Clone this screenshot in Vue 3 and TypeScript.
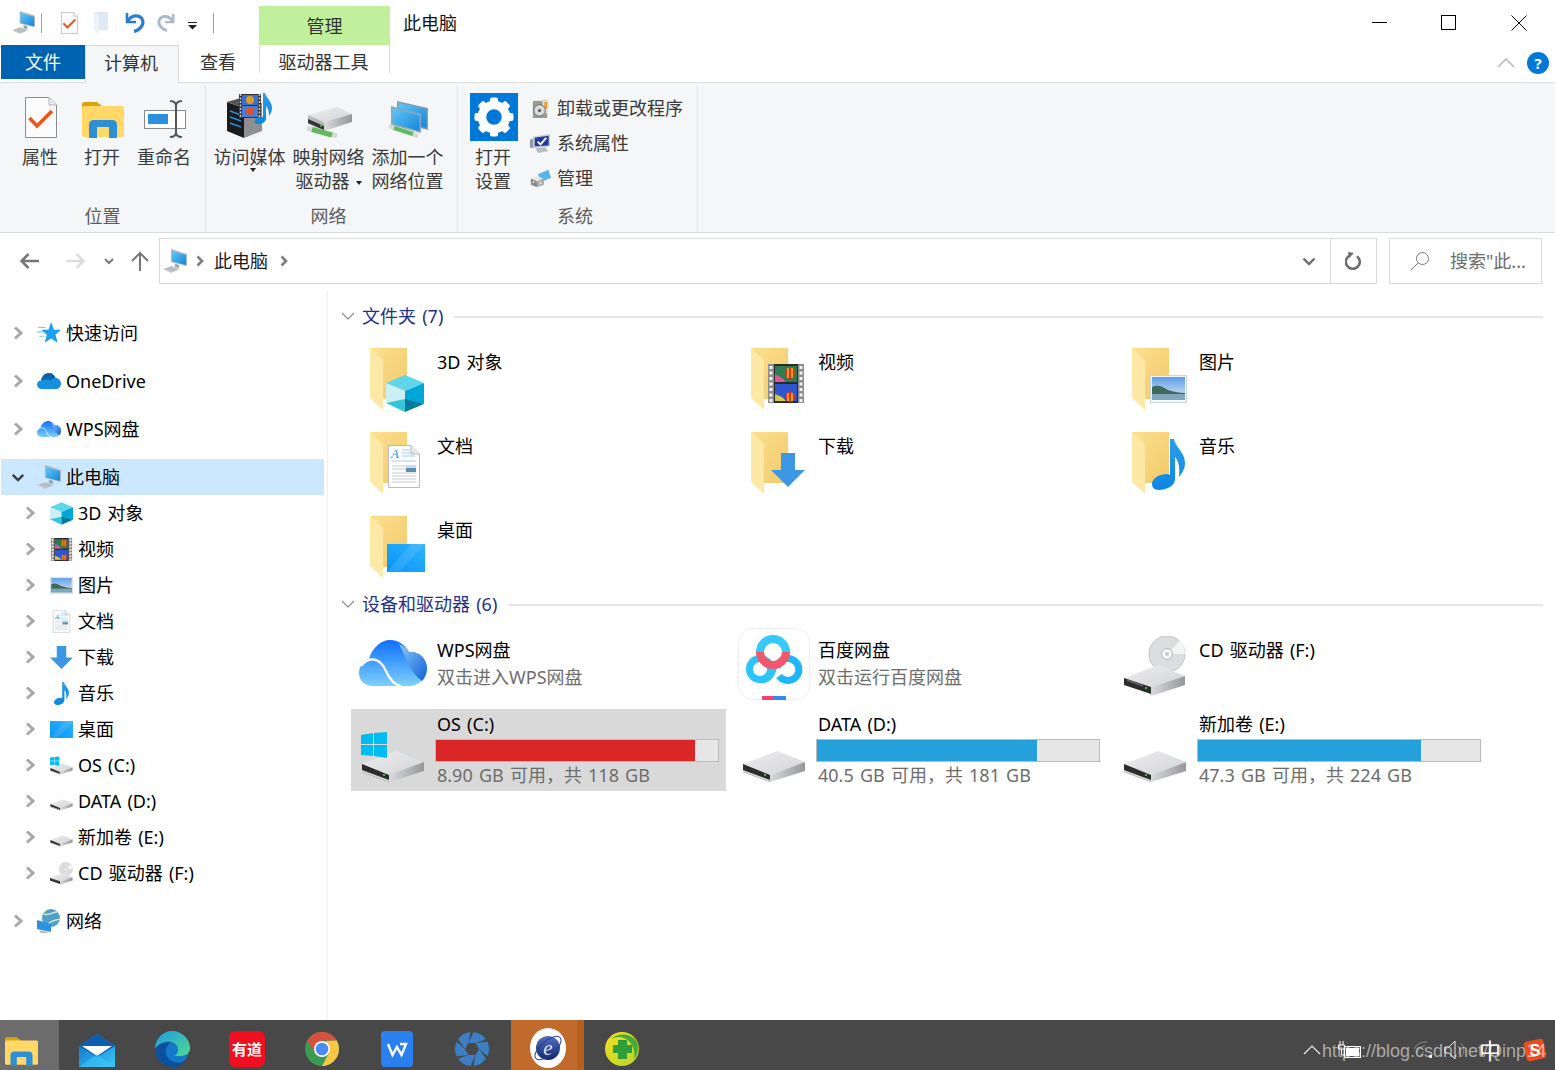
<script setup lang="ts">
type Tile = { name: string; overlay: string; x: number; y: number; w: number; h: number };
type Drive = { name: string; icon: string; detail?: string; used?: number; full?: boolean; selected?: boolean };
type NavItem = { name: string; icon: string };

const topItems: NavItem[] = [
  { name: '快速访问', icon: 'star' },
  { name: 'OneDrive', icon: 'onedrive' },
  { name: 'WPS网盘', icon: 'wpscloud' },
];

const pcItems: NavItem[] = [
  { name: '3D 对象', icon: 'cube' },
  { name: '视频', icon: 'film' },
  { name: '图片', icon: 'picture' },
  { name: '文档', icon: 'page' },
  { name: '下载', icon: 'arrow' },
  { name: '音乐', icon: 'note' },
  { name: '桌面', icon: 'desktop' },
  { name: 'OS (C:)', icon: 'windrive' },
  { name: 'DATA (D:)', icon: 'drive' },
  { name: '新加卷 (E:)', icon: 'drive' },
  { name: 'CD 驱动器 (F:)', icon: 'cddrive' },
];

const folders: Tile[] = [
  { name: '3D 对象', overlay: 'cube', x: 16, y: 27, w: 38, h: 37 },
  { name: '视频', overlay: 'film', x: 17, y: 16, w: 36, h: 39 },
  { name: '图片', overlay: 'picture', x: 18, y: 27, w: 37, h: 28 },
  { name: '文档', overlay: 'page', x: 18, y: 13, w: 32, h: 43 },
  { name: '下载', overlay: 'arrow', x: 20, y: 21, w: 34, h: 34 },
  { name: '音乐', overlay: 'note', x: 20, y: 7, w: 33, h: 51 },
  { name: '桌面', overlay: 'desktop', x: 17, y: 28, w: 38, h: 28 },
];

const drives: Drive[] = [
  { name: 'WPS网盘', icon: 'wpscloud', detail: '双击进入WPS网盘' },
  { name: '百度网盘', icon: 'baidu', detail: '双击运行百度网盘' },
  { name: 'CD 驱动器 (F:)', icon: 'cddrive' },
  { name: 'OS (C:)', icon: 'windrive', detail: '8.90 GB 可用，共 118 GB', used: 92, full: true, selected: true },
  { name: 'DATA (D:)', icon: 'drive', detail: '40.5 GB 可用，共 181 GB', used: 77.9 },
  { name: '新加卷 (E:)', icon: 'drive', detail: '47.3 GB 可用，共 224 GB', used: 79.2 },
];

const taskApps = ['mail', 'edge', 'youdao', 'chrome', 'wps', 'aperture'];
const gearTeeth = [0, 45, 90, 135, 180, 225, 270, 315];
const blades = [0, 60, 120, 180, 240, 300];
</script>

<template>
  <div class="explorer">
    <svg class="defs" aria-hidden="true">
      <defs>
        <linearGradient id="gScreen" x1="0" y1="0" x2="1" y2="1"><stop offset="0" stop-color="#62c6f7" /><stop offset="1" stop-color="#1487dc" /></linearGradient>
        <linearGradient id="gFolder" x1="0" y1="0" x2="1" y2="1"><stop offset="0" stop-color="#fde08f" /><stop offset="1" stop-color="#f1c96b" /></linearGradient>
        <linearGradient id="gNote" x1="0" y1="0" x2="0" y2="1"><stop offset="0" stop-color="#2a9fe8" /><stop offset="1" stop-color="#0c86e2" /></linearGradient>
        <linearGradient id="gDesk" x1="0" y1="1" x2="1" y2="0"><stop offset="0" stop-color="#0595f5" /><stop offset="1" stop-color="#30b2fe" /></linearGradient>
        <linearGradient id="gSky" x1="0" y1="0" x2="0" y2="1"><stop offset="0" stop-color="#5f9fe6" /><stop offset="1" stop-color="#dfeaf3" /></linearGradient>
        <linearGradient id="gDriveTop" x1="0" y1="0" x2="1" y2="1"><stop offset="0" stop-color="#eeeef0" /><stop offset="1" stop-color="#d2d3d6" /></linearGradient>
        <linearGradient id="gDriveSide" x1="0" y1="0" x2="1" y2="0"><stop offset="0" stop-color="#d9dadc" /><stop offset="1" stop-color="#96979b" /></linearGradient>
        <linearGradient id="gCloud" x1="0" y1="0" x2="0" y2="1"><stop offset="0" stop-color="#0f6ffb" /><stop offset="1" stop-color="#7dd0fd" /></linearGradient>
        <linearGradient id="gCloudDark" x1="0" y1="0" x2="1" y2="1"><stop offset="0" stop-color="#8ecdf8" /><stop offset="1" stop-color="#0d5fd9" /></linearGradient>
        <linearGradient id="gMail" x1="0" y1="0" x2="1" y2="1"><stop offset="0" stop-color="#0c6fc4" /><stop offset="1" stop-color="#39c6fa" /></linearGradient>
        <linearGradient id="gEdge" x1="0" y1="0" x2="1" y2="1"><stop offset="0" stop-color="#1b9de2" /><stop offset="1" stop-color="#52d98f" /></linearGradient>
        <linearGradient id="gSphere" x1="0" y1="0" x2="0" y2="1"><stop offset="0" stop-color="#5470c0" /><stop offset="1" stop-color="#10266e" /></linearGradient>
        <linearGradient id="g360" x1="0" y1="0" x2="1" y2="1"><stop offset="0" stop-color="#f4e21e" /><stop offset="1" stop-color="#b9d12a" /></linearGradient>
      </defs>

      <symbol id="pc" viewBox="0 0 24 24">
        <polygon points="8,0 24,5 24,17 8,13" fill="#aeb8c2" />
        <polygon points="9,2 23,6 23,16 9,12.5" fill="url(#gScreen)" />
        <polygon points="12,14.5 16,16 16,19 12,18" fill="#98a3ad" />
        <polygon points="0,20 9,17 17,20 8,24" fill="#c6cace" />
        <path d="M3 20 l6-2 M6 21 l6-2 M9 22 l5-2" stroke="#8e959b" stroke-width="1" stroke-dasharray="1 1" />
      </symbol>
      <symbol id="doccheck" viewBox="0 0 32 41">
        <path d="M.5.5H24L31.5 8V40.5H.5Z" fill="#fbfbfb" stroke="#8c8c8c" />
        <path d="M24 .5V8H31.5" fill="#eee" stroke="#b5b5b5" />
        <polyline points="4.5,21 12,29 27,14" fill="none" stroke="#e8561d" stroke-width="3.6" />
      </symbol>
      <symbol id="ghost" viewBox="0 0 14 22">
        <polygon points="0,0 14,0 14,18 5,18 5,22 0,18" fill="#dfe9f5" />
        <polygon points="0,0 5,4 5,22 0,18" fill="#edf3fa" />
      </symbol>
      <symbol id="undo" viewBox="0 0 20 21">
        <path d="M2 1V10H11" fill="none" stroke="#2b7cd3" stroke-width="2.6" />
        <path d="M3 9C6 3 14 2 17 7C20 12 15 18 9 19.5" fill="none" stroke="#2b7cd3" stroke-width="3.2" />
      </symbol>
      <symbol id="redo" viewBox="0 0 20 21">
        <path d="M18 1V10H9" fill="none" stroke="#a9b9c8" stroke-width="2.6" />
        <path d="M17 9C14 3 6 2 3 7C0 12 5 18 11 19.5" fill="none" stroke="#a9b9c8" stroke-width="3.2" />
      </symbol>
      <symbol id="openfolder" viewBox="0 0 42 36">
        <path d="M0 2Q0 0 2 0H15L20 4V8H0Z" fill="#dba40e" />
        <path d="M0 6Q0 4 2 4H40Q42 4 42 6V33Q42 35 40 35H2Q0 35 0 33Z" fill="#ffd868" />
        <path d="M7 36V23Q7 18 12 18H30Q35 18 35 23V36H27V25H15V36Z" fill="#2d8fd6" />
      </symbol>
      <symbol id="rename" viewBox="0 0 42 38">
        <rect x=".5" y="10.5" width="41" height="18" fill="#fff" stroke="#8a8a8a" />
        <rect x="4" y="14" width="20" height="10" fill="#2b90e0" />
        <path d="M26 1Q32 1 32 6Q32 1 38 1M32 6V32M26 37Q32 37 32 32Q32 37 38 37" fill="none" stroke="#555" stroke-width="2" />
      </symbol>
      <symbol id="media" viewBox="0 0 48 46">
        <polygon points="1,9 18,15 18,45 1,38" fill="#1b1b1b" />
        <polygon points="1,9 18,4 36,10 18,15" fill="#555" />
        <polygon points="18,15 36,10 36,38 18,45" fill="#8d8f93" />
        <path d="M4 18l11 4M4 24l11 4M4 30l11 4" stroke="#2d8fe0" stroke-width="1.4" />
        <rect x="13" y="1" width="22" height="24" fill="#333" />
        <rect x="16" y="2" width="16" height="10" fill="#3d6fd0" />
        <rect x="16" y="13" width="16" height="11" fill="#4a7bd8" />
        <circle cx="24" cy="7" r="4" fill="#d9a021" />
        <circle cx="24" cy="18" r="4" fill="#d9552a" />
        <line x1="14.5" y1="1" x2="14.5" y2="25" stroke="#ccc" stroke-width="1.5" stroke-dasharray="2 1.5" />
        <line x1="33.5" y1="1" x2="33.5" y2="25" stroke="#ccc" stroke-width="1.5" stroke-dasharray="2 1.5" />
        <path d="M37 0H39C40 5 46 8 46 15C46 19 44 21 43 23C43 18 42 15 40 13V26C40 29 35 31 32 31C29 31 28 29 29 27C30 24 34 23 37 24Z" fill="url(#gNote)" />
      </symbol>
      <symbol id="mapdrive" viewBox="0 0 47 31">
        <polygon points="3,8 32,0 47,7 19,15" fill="url(#gDriveTop)" />
        <polygon points="19,15 47,7 47,15 19,24" fill="url(#gDriveSide)" />
        <polygon points="3,8 19,15 19,24 3,17" fill="#b8b9bb" />
        <polygon points="3,12 19,19 19,23 3,16" fill="#333" />
        <circle cx="16" cy="19" r="1" fill="#45d24a" />
        <line x1="2" y1="21" x2="32" y2="29" stroke="#d5d8d5" stroke-width="4.500" />
        <line x1="7" y1="22.500" x2="27" y2="28" stroke="#62b95a" stroke-width="5" />
      </symbol>
      <symbol id="netloc" viewBox="0 0 41 37">
        <polygon points="10,0 41,7 41,29 10,21" fill="#7f9fb5" />
        <polygon points="11.5,2 39.5,8.5 39.5,27 11.5,20" fill="url(#gScreen)" />
        <polygon points="4,5 34,13 34,32 4,24" fill="#8aa9bf" />
        <polygon points="5.5,7 32.5,14.5 32.5,30 5.5,22.5" fill="url(#gScreen)" />
        <line x1="2" y1="25" x2="31" y2="35" stroke="#d5d8d5" stroke-width="4" />
        <line x1="7" y1="27" x2="26" y2="33" stroke="#62b95a" stroke-width="4" />
      </symbol>
      <symbol id="gear" viewBox="0 0 48 48">
        <rect width="48" height="48" fill="#0078d7" />
        <circle cx="24" cy="24" r="12" fill="none" stroke="#fff" stroke-width="8.5" />
        <rect v-for="a in gearTeeth" :key="a" x="20" y="4.5" width="8" height="9" rx="2" fill="#fff" :transform="`rotate(${a} 24 24)`" />
      </symbol>
      <symbol id="uninstall" viewBox="0 0 18 22">
        <rect x="1" y="3" width="15" height="18" fill="#9b9b8f" />
        <rect x="11" y="1" width="6" height="15" fill="#dfe0d8" />
        <rect x="13" y="4" width="3" height="7" fill="#f09a2f" />
        <circle cx="8" cy="13" r="6" fill="#d8dcd8" stroke="#666" />
        <circle cx="8" cy="13" r="1.6" fill="#555" />
      </symbol>
      <symbol id="sysprop" viewBox="0 0 22 20">
        <polygon points="3,3 21,0 21,13 3,15" fill="#c5cbd2" />
        <polygon points="5,4 19.5,2 19.5,12 5,13" fill="#21389d" />
        <polyline points="8,8 11,11 17,4" fill="none" stroke="#fff" stroke-width="2" />
        <polygon points="0,6 3,5 3,15 0,14" fill="#8d95a0" />
        <polygon points="6,15 16,14 19,18 8,20" fill="#b9bdc3" />
      </symbol>
      <symbol id="manage" viewBox="0 0 24 20">
        <polygon points="9,5 21,0 24,9 13,14" fill="#57b5ee" />
        <polygon points="1,10 8,7 15,10 8,13" fill="#e7e7e7" />
        <polygon points="1,10 8,13 8,20 1,17" fill="#8a8a8a" />
        <polygon points="8,13 16,10 16,17 8,20" fill="#adadad" />
        <circle cx="4" cy="14" r="1" fill="#fff" />
        <circle cx="12" cy="15" r="1" fill="#fff" />
      </symbol>
      <symbol id="star" viewBox="0 0 22 20">
        <polygon points="13,0 15.5,7 22,7 17,11.5 19,19 13,15 7,19 9,11.5 4,7 10.5,7" fill="#1c9ff0" />
        <path d="M1 5H8M0 9H6M2 13H7" stroke="#7cc6f5" stroke-width="1" />
      </symbol>
      <symbol id="onedrive" viewBox="0 0 24 16">
        <path d="M5 16C2 16 0 14 0 11.5C0 9 2 7.5 4 7.5C5 3 8 0 12 0C15 0 17.5 2 18.5 5C21.5 5 24 7.5 24 10.5C24 14 21.5 16 19 16Z" fill="#1490df" />
        <path d="M4 7.5C5 3 8 0 12 0C15 0 17.5 2 18.5 5C16 5 14.5 6 13.5 7.5C11 6 7 6 4 7.5Z" fill="#0f62a8" />
      </symbol>
      <symbol id="wpscloud" viewBox="0 0 68 46">
        <path d="M14 46C5 46 0 40 0 33C0 26 5 20 10 19C13 8 22 0 31 0C40 0 46 5 50 12C60 11 68 19 68 28C68 38 60 46 50 46Z" fill="url(#gCloud)" />
        <path d="M40 4C46 14 50 32 63 41C66 38 68 33 68 28C68 19 60 11 50 12C47 8 44 6 40 4Z" fill="url(#gCloudDark)" />
        <path d="M2 26C12 14 22 20 27 31C31 40 36 45 42 46" fill="none" stroke="#fff" stroke-width="2.2" />
      </symbol>
      <symbol id="folder" viewBox="0 0 56 64">
        <polygon points="0,0 37,0 37,51 13,51 0,40" fill="url(#gFolder)" />
        <polygon points="0,0 13,12 13,62 0,50" fill="#fde8a6" />
      </symbol>
      <symbol id="cube" viewBox="0 0 38 37">
        <polygon points="19,0 38,8 19,16 0,8" fill="#5fd5ea" />
        <polygon points="0,8 19,16 19,25 0,28" fill="#cbeff3" />
        <polygon points="0,28 19,24 19,37" fill="#34c6d8" />
        <polygon points="38,8 19,16 19,25 38,29" fill="#00a6d6" />
        <polygon points="38,29 19,24 19,37" fill="#007a9e" />
      </symbol>
      <symbol id="film" viewBox="0 0 36 39">
        <rect width="36" height="39" fill="#8d8d8d" />
        <rect x="6" y="0" width="24" height="39" fill="#2a2a2a" />
        <line x1="3" y1="2" x2="3" y2="39" stroke="#f2f2f2" stroke-width="3" stroke-dasharray="3 2.5" />
        <line x1="33" y1="2" x2="33" y2="39" stroke="#f2f2f2" stroke-width="3" stroke-dasharray="3 2.5" />
        <rect x="7" y="2" width="22" height="16" fill="#2e7d4f" />
        <rect x="7" y="20" width="22" height="17" fill="#2f55cf" />
        <path d="M7 10L14 14L18 18H7Z" fill="#d85a9b" />
        <path d="M7 30L14 33L18 37H7Z" fill="#d9c94b" />
        <ellipse cx="22" cy="9" rx="5" ry="6" fill="#d9351e" />
        <path d="M20 4V14M24 4V14" stroke="#e8c41e" stroke-width="1.5" />
        <ellipse cx="22" cy="33" rx="5" ry="5" fill="#d9351e" />
        <path d="M20 29V37M24 29V37" stroke="#e8c41e" stroke-width="1.5" />
      </symbol>
      <symbol id="picture" viewBox="0 0 37 28">
        <rect x=".5" y=".5" width="36" height="27" fill="#f3f6f9" stroke="#ccd3da" />
        <rect x="2" y="2" width="33" height="23" fill="url(#gSky)" />
        <path d="M2 12C8 9 13 12 18 15C24 17 30 18 35 18V25H2Z" fill="#3f6a5a" />
        <rect x="2" y="19" width="33" height="6" fill="#7da7bd" />
      </symbol>
      <symbol id="page" viewBox="0 0 32 43">
        <path d="M.5.5H23L31.5 9V42.5H.5Z" fill="#fdfdfd" stroke="#b4bac0" />
        <path d="M23 .5V9H31.5" fill="#e8ecef" stroke="#b4bac0" />
        <path d="M14 5H22M14 8H26M14 11H27M4 16H28" stroke="#a8cdeb" stroke-width="1" />
        <path d="M4 21H18M4 24H18M4 28H28M4 31H28M4 34H28M4 37H28" stroke="#c8cdd2" stroke-width="1" />
        <rect x="18" y="20" width="10" height="7" fill="#5b8fa8" />
        <rect x="18" y="20" width="10" height="3" fill="#bfe0f3" />
      </symbol>
      <symbol id="arrow" viewBox="0 0 34 34">
        <polygon points="10,0 24,0 24,17 34,17 17,34 0,17 10,17" fill="#3c98e5" />
      </symbol>
      <symbol id="note" viewBox="0 0 33 51">
        <path d="M18 0H22C23 8 33 13 33 24C33 30 30 34 27 38C28 30 27 22 23 18V40C23 47 14 51 7 51C2 51 0 48 0 45C0 39 8 35 15 35Q17 35 18 36Z" fill="url(#gNote)" />
      </symbol>
      <symbol id="desktop" viewBox="0 0 38 28">
        <rect width="38" height="28" fill="url(#gDesk)" />
        <polygon points="0,28 24,0 38,0 12,28" fill="#fff" opacity=".1" />
        <rect y="27" width="38" height="1" fill="#5d8eae" />
      </symbol>
      <symbol id="drive" viewBox="0 0 64 50">
        <g transform="translate(1 19)">
          <polygon points="0,13 34,0 62,11 27,24" fill="url(#gDriveTop)" />
          <polygon points="27,24 62,11 62,20 27,31" fill="url(#gDriveSide)" />
          <polygon points="0,13 27,24 27,31 0,21" fill="#2c2c2c" />
          <polygon points="0,19 27,29 27,31 0,21" fill="#d8d8d8" />
          <circle cx="22" cy="24" r="1.1" fill="#3fe04a" />
        </g>
      </symbol>
      <symbol id="windrive" viewBox="0 0 64 50">
        <use href="#drive" width="64" height="50" />
        <polygon points="0,3 12,1 12,12 0,12" fill="#00bcf2" />
        <polygon points="13,1 26,0 26,12 13,12" fill="#00bcf2" />
        <polygon points="0,13 12,13 12,24 0,23" fill="#00bcf2" />
        <polygon points="13,13 26,13 26,26 13,24" fill="#00bcf2" />
      </symbol>
      <symbol id="cddrive" viewBox="0 0 62 60">
        <circle cx="43" cy="18" r="18" fill="#dcdddf" stroke="#c2c3c6" />
        <path d="M43 18L56 5A18 18 0 0 1 61 18Z" fill="#f2f5f2" />
        <circle cx="43" cy="18" r="5.5" fill="#f5f5f5" stroke="#b5b5b5" />
        <circle cx="43" cy="18" r="2" fill="#c9c9c9" />
        <g transform="translate(0 29)">
          <polygon points="0,13 34,0 61,11 27,22" fill="url(#gDriveTop)" />
          <polygon points="27,22 61,11 61,20 27,31" fill="url(#gDriveSide)" />
          <polygon points="0,13 27,22 27,29 0,20" fill="#2c2c2c" />
          <path d="M3 15L19 21" stroke="#666" stroke-width="1.5" />
          <circle cx="22" cy="23" r="1.1" fill="#3fe04a" />
        </g>
      </symbol>
      <symbol id="baidu" viewBox="0 0 72 72">
        <rect x=".5" y=".5" width="71" height="71" rx="14" fill="#fff" stroke="#eeeeee" />
        <circle cx="22" cy="41" r="10.5" fill="none" stroke="#2cc4fb" stroke-width="7" />
        <path d="M22 51.5C30 53 34 46 36 38" fill="none" stroke="#2cc4fb" stroke-width="7" />
        <path d="M41 48A11 11 0 1 0 39 40" fill="none" stroke="#1eb5fb" stroke-width="7" />
        <path d="M22 24A13 13 0 0 1 48 24" fill="none" stroke="#35c8fb" stroke-width="8" />
        <path d="M22 24A13 13 0 0 0 48 24" fill="none" stroke="#f4566b" stroke-width="8" />
        <rect x="24" y="68" width="12" height="4" fill="#f4416f" />
        <rect x="36" y="68" width="12" height="4" fill="#2b8df5" />
      </symbol>
      <symbol id="network" viewBox="0 0 24 24">
        <circle cx="14" cy="9" r="9" fill="#4f9fc9" />
        <path d="M7 5C11 7 16 3 20 3M10 17C12 12 18 11 23 10" stroke="#c9e8d3" stroke-width="1.5" fill="none" />
        <polygon points="0,11 14,15 14,23 0,20" fill="#2d92de" />
        <polygon points="2,21 12,23 10,24 4,24" fill="#bbb" />
      </symbol>
      <symbol id="mail" viewBox="0 0 36 33">
        <polygon points="18,0 36,12 36,33 0,33 0,12" fill="url(#gMail)" />
        <polygon points="18,0 36,12 18,23 0,12" fill="#0b5eb0" />
        <polygon points="3,12 33,12 18,22" fill="#fff" />
        <polygon points="0,33 18,20 36,33" fill="#3ec5f7" opacity=".6" />
      </symbol>
      <symbol id="edge" viewBox="0 0 36 36">
        <circle cx="18" cy="18" r="17" fill="#1378c7" />
        <path d="M1 18C1 8 9 0 18 0C28 0 36 8 36 17C36 23 31 25 26 25H20C24 23 25 19 23 15C20 9 7 8 1 18Z" fill="url(#gEdge)" />
        <path d="M1 18C1 28 9 36 19 36C24 36 28 34 31 31C24 33 14 31 12 23C11 18 13 14 17 11C9 11 3 14 1 18Z" fill="#0b4f9e" />
      </symbol>
      <symbol id="youdao" viewBox="0 0 36 36">
        <rect width="36" height="36" rx="6" fill="#f00f20" />
      </symbol>
      <symbol id="chrome" viewBox="0 0 36 36">
        <circle cx="18" cy="18" r="17" fill="#3c9b52" />
        <path d="M3.3 9.5A17 17 0 0 1 32.7 9.5H18L11 22Z" fill="#d9503f" />
        <path d="M32.7 9.5A17 17 0 0 1 18 35L25 22L22 10Z" fill="#f6c644" />
        <circle cx="18" cy="18" r="8" fill="#fff" />
        <circle cx="18" cy="18" r="6.3" fill="#4c8bf5" />
      </symbol>
      <symbol id="wps" viewBox="0 0 32 36">
        <rect width="32" height="36" rx="4" fill="#2b80f0" />
        <path d="M7 13L11.5 24L16 16L20.5 24L25 13H19" fill="none" stroke="#fff" stroke-width="2.4" />
      </symbol>
      <symbol id="aperture" viewBox="0 0 36 36">
        <path v-for="a in blades" :key="a" d="M19.5 1.06A17 17 0 0 1 31.9 8.2L21.5 11.9L14.5 11.9Z" fill="#3d7fc4" :transform="`rotate(${a} 18 18)`" />
      </symbol>
      <symbol id="iecircle" viewBox="0 0 36 40">
        <ellipse cx="18" cy="20" rx="18" ry="20" fill="#fff" />
        <circle cx="18" cy="20" r="12" fill="url(#gSphere)" />
        <ellipse cx="18" cy="20" rx="16" ry="7" fill="none" stroke="#2a3f90" stroke-width="1" transform="rotate(-40 18 20)" />
      </symbol>
      <symbol id="q360" viewBox="0 0 36 36">
        <circle cx="18" cy="18" r="17" fill="url(#g360)" />
        <path d="M7 8C14 1 28 2 33 11C35 16 34 24 30 28C32 20 28 10 20 7C15 5 11 6 7 8Z" fill="#49a83d" />
        <path d="M14 9H23V14H28V22H23V28H14V22H9V14H14Z" fill="#2f9e3a" />
      </symbol>
      <symbol id="sogou" viewBox="0 0 24 24">
        <rect x="2" y="2" width="20" height="20" rx="3" fill="#ea4c1c" transform="rotate(-12 12 12)" />
      </symbol>
    </svg>

    <header class="titlebar">
      <div class="qat">
        <svg class="q-pc"><use href="#pc" /></svg>
        <span class="q-sep first"></span>
        <svg class="q-doc"><use href="#doccheck" /></svg>
        <svg class="q-ghost"><use href="#ghost" /></svg>
        <svg class="q-undo"><use href="#undo" /></svg>
        <svg class="q-redo"><use href="#redo" /></svg>
        <svg class="q-drop" viewBox="0 0 9 9"><path d="M0 1.5H9M0 4H9L4.5 8.5Z" fill="#222" stroke="none" /><path d="M0 1.5H9" stroke="#222" /></svg>
        <span class="q-sep last"></span>
      </div>
      <div class="context-head">管理</div>
      <div class="win-title">此电脑</div>
      <div class="win-controls">
        <span class="ctl"><svg width="16" height="16" viewBox="0 0 16 16"><path d="M1 7.5H16" stroke="#000" /></svg></span>
        <span class="ctl"><svg width="16" height="16" viewBox="0 0 16 16"><rect x=".5" y=".5" width="14" height="14" fill="none" stroke="#000" /></svg></span>
        <span class="ctl"><svg width="16" height="16" viewBox="0 0 16 16"><path d="M.5.5L15.5 15.5M15.5.5L.5 15.5" stroke="#000" /></svg></span>
      </div>
    </header>

    <nav class="tabs">
      <div class="tab file">文件</div>
      <div class="tab active">计算机</div>
      <div class="tab view">查看</div>
      <div class="tab tool">驱动器工具</div>
      <div class="tab-right">
        <svg width="18" height="10" viewBox="0 0 18 10"><path d="M1 9L9 1L17 9" fill="none" stroke="#b8b8b8" stroke-width="1.6" /></svg>
        <span class="help">?</span>
      </div>
    </nav>

    <section class="ribbon">
      <div class="group g-loc">
        <div class="buttons">
          <div class="rbtn w62"><svg class="r-doc"><use href="#doccheck" /></svg><span>属性</span></div>
          <div class="rbtn w62"><svg class="r-open"><use href="#openfolder" /></svg><span>打开</span></div>
          <div class="rbtn w62"><svg class="r-rename"><use href="#rename" /></svg><span>重命名</span></div>
        </div>
        <div class="glabel">位置</div>
      </div>
      <div class="group g-net">
        <div class="buttons">
          <div class="rbtn w79"><svg class="r-media"><use href="#media" /></svg><span>访问媒体</span><i class="caret low"></i></div>
          <div class="rbtn w79"><svg class="r-map"><use href="#mapdrive" /></svg><span>映射网络</span><span>驱动器 <i class="caret"></i></span></div>
          <div class="rbtn w79"><svg class="r-loc"><use href="#netloc" /></svg><span>添加一个</span><span>网络位置</span></div>
        </div>
        <div class="glabel">网络</div>
      </div>
      <div class="group g-sys">
        <div class="buttons">
          <div class="rbtn w48"><svg class="r-gear"><use href="#gear" /></svg><span>打开</span><span>设置</span></div>
          <div class="small-col">
            <div class="sbtn"><svg class="s-a"><use href="#uninstall" /></svg>卸载或更改程序</div>
            <div class="sbtn"><svg class="s-a"><use href="#sysprop" /></svg>系统属性</div>
            <div class="sbtn"><svg class="s-a"><use href="#manage" /></svg>管理</div>
          </div>
        </div>
        <div class="glabel">系统</div>
      </div>
    </section>

    <section class="addressrow">
      <svg class="nav-arrow" viewBox="0 0 20 18"><path d="M1.5 9H19M8.5 2L1.5 9L8.5 16" fill="none" stroke="#777" stroke-width="2.6" /></svg>
      <svg class="nav-arrow fwd" viewBox="0 0 20 18"><path d="M1 9H18.5M11.5 2L18.5 9L11.5 16" fill="none" stroke="#dedede" stroke-width="2.6" /></svg>
      <svg class="nav-down" viewBox="0 0 10 7"><path d="M1 1L5 5L9 1" fill="none" stroke="#777" stroke-width="2" /></svg>
      <svg class="nav-up" viewBox="0 0 18 20"><path d="M9 20V2M1 10L9 2L17 10" fill="none" stroke="#777" stroke-width="2" /></svg>
      <div class="address">
        <svg class="addr-pc"><use href="#pc" /></svg>
        <svg class="addr-chev" viewBox="0 0 8 12"><path d="M1.5 1.5L6 6L1.5 10.5" fill="none" stroke="#7d7d7d" stroke-width="2.6" /></svg>
        <span class="crumb">此电脑</span>
        <svg class="addr-chev" viewBox="0 0 8 12"><path d="M1.5 1.5L6 6L1.5 10.5" fill="none" stroke="#7d7d7d" stroke-width="2.6" /></svg>
        <svg class="addr-drop" viewBox="0 0 14 9"><path d="M1.5 1.5L7 7L12.5 1.5" fill="none" stroke="#6d6d6d" stroke-width="2.4" /></svg>
        <div class="refresh">
          <svg width="18" height="18" viewBox="0 0 18 18"><path d="M12 4.2A7 7 0 1 1 5.5 3.2" fill="none" stroke="#6d6d6d" stroke-width="2.6" /><polygon points="3,0 9,1 4,6" fill="#6d6d6d" /></svg>
        </div>
      </div>
      <div class="search">
        <svg width="20" height="20" viewBox="0 0 20 20"><circle cx="12.5" cy="7.5" r="6" fill="none" stroke="#7a7a7a" /><path d="M8 12L1 19" stroke="#7a7a7a" /></svg>
        <span>搜索"此...</span>
      </div>
    </section>

    <main class="body">
      <aside class="sidebar">
        <div v-for="item in topItems" :key="item.name" class="nav-row root">
          <svg class="chev" viewBox="0 0 10 16"><path d="M2 2.500L8 8L2 13.500" fill="none" stroke="#a8a8a8" stroke-width="3" /></svg>
          <svg class="nav-ic"><use :href="'#' + item.icon" /></svg>
          <span>{{ item.name }}</span>
        </div>
        <div class="nav-row pc-row">
          <svg class="chev open" viewBox="0 0 16 10"><path d="M2 2L8 8L14 2" fill="none" stroke="#3c3c3c" stroke-width="2.8" /></svg>
          <svg class="nav-ic"><use href="#pc" /></svg>
          <span>此电脑</span>
        </div>
        <div class="children">
          <div v-for="item in pcItems" :key="item.name" class="nav-row child">
            <svg class="chev" viewBox="0 0 10 16"><path d="M2 2.500L8 8L2 13.500" fill="none" stroke="#a8a8a8" stroke-width="3" /></svg>
            <svg class="nav-ic">
              <use :href="'#' + item.icon" />
              <text v-if="item.icon === 'page'" x="5" y="9" class="doc-a small">A</text>
            </svg>
            <span>{{ item.name }}</span>
          </div>
        </div>
        <div class="nav-row root">
          <svg class="chev" viewBox="0 0 10 16"><path d="M2 2.500L8 8L2 13.500" fill="none" stroke="#a8a8a8" stroke-width="3" /></svg>
          <svg class="nav-ic"><use href="#network" /></svg>
          <span>网络</span>
        </div>
      </aside>

      <div class="content">
        <div class="sec-head">
          <svg class="sec-chev" viewBox="0 0 14 8"><path d="M1 1L7 7L13 1" fill="none" stroke="#8a8a8a" stroke-width="1.2" /></svg>
          <span>文件夹 (7)</span>
          <i class="sec-line"></i>
        </div>
        <div class="tile-grid folders">
          <div v-for="f in folders" :key="f.name" class="folder-tile">
            <svg class="folder-ic" width="56" height="64">
              <use href="#folder" width="56" height="64" />
              <use :href="'#' + f.overlay" :x="f.x" :y="f.y" :width="f.w" :height="f.h" />
              <text v-if="f.overlay === 'page'" x="21" y="26" class="doc-a">A</text>
            </svg>
            <span class="tile-name">{{ f.name }}</span>
          </div>
        </div>

        <div class="sec-head">
          <svg class="sec-chev" viewBox="0 0 14 8"><path d="M1 1L7 7L13 1" fill="none" stroke="#8a8a8a" stroke-width="1.2" /></svg>
          <span>设备和驱动器 (6)</span>
          <i class="sec-line"></i>
        </div>
        <div class="tile-grid devices">
          <div v-for="d in drives" :key="d.name" class="device-tile" :class="{ selected: d.selected, meter: d.used }">
            <div class="dev-cell">
              <svg :class="'i-' + d.icon"><use :href="'#' + d.icon" /></svg>
            </div>
            <div class="dev-info">
              <div class="tile-name">{{ d.name }}</div>
              <div v-if="d.used" class="bar">
                <div class="bar-fill" :class="{ full: d.full }" :style="{ width: d.used + '%' }"></div>
              </div>
              <div v-if="d.detail" class="tile-detail">{{ d.detail }}</div>
            </div>
          </div>
        </div>
      </div>
    </main>

    <footer class="taskbar">
      <div class="task first"><svg class="t-folder"><use href="#openfolder" /></svg></div>
      <div v-for="a in taskApps" :key="a" class="task">
        <svg :class="'t-' + a">
          <use :href="'#' + a" />
          <text v-if="a === 'youdao'" x="18" y="24" class="yd-text">有道</text>
        </svg>
      </div>
      <div class="task running">
        <svg class="t-ie">
          <use href="#iecircle" />
          <text x="18" y="27" class="ie-text">e</text>
        </svg>
      </div>
      <div class="task"><svg class="t-360"><use href="#q360" /></svg></div>
      <div class="tray">
        <svg class="tr-up" viewBox="0 0 18 10"><path d="M1 9L9 1L17 9" fill="none" stroke="#eee" stroke-width="1.2" /></svg>
        <svg class="tr-bat" viewBox="0 0 24 18"><rect x="7.5" y="5.5" width="16" height="11" fill="#484848" stroke="#fff" /><rect x="9" y="7" width="13" height="8" fill="#fff" /><path d="M3 0V4M6 0V4M1.5 4H7.5V8H1.5ZM4.5 8V14H8" fill="none" stroke="#fff" /></svg>
        <svg class="tr-wifi" viewBox="0 0 22 18"><path d="M1 8A14 14 0 0 1 14 1M4 12A9 9 0 0 1 12 5M8 15A4 4 0 0 1 11 11" fill="none" stroke="#8a8a8a" /><rect x="16" y="14" width="3" height="3" fill="#e8e8e8" /></svg>
        <svg class="tr-vol" viewBox="0 0 22 20"><path d="M1 7H5L11 1V19L5 13H1Z" fill="none" stroke="#eee" /><path d="M14 6A6 6 0 0 1 14 14M17 3A10 10 0 0 1 17 17" fill="none" stroke="#8a8a8a" /></svg>
        <span class="tr-ime">中</span>
        <svg class="tr-sogou">
          <use href="#sogou" />
          <text x="12" y="18" class="sg-text">S</text>
        </svg>
      </div>
      <div class="watermark">https://blog.csdn.net/Qinp14</div>
    </footer>
  </div>
</template>

<style scoped>
.explorer {
  position: relative;
  display: flex;
  flex-direction: column;
  width: 1555px;
  height: 1070px;
  overflow: hidden;
  background: #fff;
  color: #000;
  font: 18px/24px 'Noto Sans', 'Noto Sans CJK SC', sans-serif;
  word-spacing: 1.5px;
}
.defs {
  position: absolute;
  width: 0;
  height: 0;
}
svg {
  display: block;
  flex: none;
}
.doc-a {
  font: italic 13px 'Liberation Serif', serif;
  fill: #2f8fe0;
}
.doc-a.small { font-size: 7px; }
.yd-text {
  font: 700 15px 'Noto Sans CJK SC', sans-serif;
  fill: #fff;
  text-anchor: middle;
}
.ie-text {
  font: italic 21px 'Liberation Serif', serif;
  fill: #dfe8fa;
  text-anchor: middle;
}
.sg-text {
  font: 700 16px 'Liberation Sans', sans-serif;
  fill: #fff;
  text-anchor: middle;
}

/* title bar */
.titlebar {
  display: flex;
  height: 45px;
}
.qat {
  display: flex;
  align-items: center;
  width: 259px;
  padding-left: 12px;
  box-sizing: border-box;
}
.q-pc { width: 23px; height: 23px; }
.q-sep { width: 1px; height: 20px; background: #a0a0a0; }
.q-sep.first { margin-left: 6px; }
.q-sep.last { margin-left: 16px; }
.q-doc { width: 17px; height: 22px; margin-left: 19px; }
.q-ghost { width: 14px; height: 22px; margin-left: 16px; }
.q-undo { width: 20px; height: 21px; margin-left: 17px; }
.q-redo { width: 18px; height: 21px; margin-left: 12px; }
.q-drop { width: 9px; height: 9px; margin: 5px 0 0 13px; }
.context-head {
  align-self: flex-end;
  width: 131px;
  height: 39px;
  background: #c1f09c;
  text-align: center;
  line-height: 41px;
  color: #333;
}
.win-title {
  margin: 11px 0 0 13px;
  color: #111;
}
.win-controls {
  display: flex;
  margin-left: auto;
  padding-right: 1px;
}
.ctl {
  display: flex;
  justify-content: center;
  width: 70px;
  padding-top: 15px;
}

/* tabs */
.tabs {
  display: flex;
  height: 38px;
  box-sizing: border-box;
  border-bottom: 1px solid #dadbdc;
}
.tab {
  height: 37px;
  box-sizing: border-box;
  text-align: center;
  line-height: 35px;
  color: #333;
}
.tab.file {
  width: 84px;
  height: 34px;
  margin-left: 1px;
  background: #0063b1;
  color: #fff;
  line-height: 34px;
}
.tab.active {
  width: 94px;
  height: 38px;
  padding-right: 2px;
  border: 1px solid #dadbdc;
  border-bottom: 0;
  background: #f5f6f7;
}
.tab.view { width: 80px; padding-right: 2px; }
.tab.tool {
  width: 131px;
  height: 28px;
  padding-right: 2px;
  border-left: 1px solid #dadbdc;
  border-right: 1px solid #dadbdc;
}
.tab-right {
  display: flex;
  align-items: center;
  gap: 12px;
  height: 36px;
  margin-left: auto;
  padding-right: 6px;
}
.help {
  width: 22px;
  height: 22px;
  border-radius: 50%;
  background: #0078d7;
  color: #fff;
  text-align: center;
  font: 700 15px/22px 'Noto Sans', sans-serif;
}

/* ribbon */
.ribbon {
  display: flex;
  height: 150px;
  box-sizing: border-box;
  background: #f5f6f7;
  border-bottom: 1px solid #dadbdc;
  color: #3a3a3a;
}
.group {
  display: flex;
  flex-direction: column;
  box-sizing: border-box;
  height: 146px;
  margin-top: 3px;
  border-right: 1px solid #e1e3e6;
}
.g-loc { width: 206px; padding-left: 9px; }
.g-net { width: 252px; padding-left: 4px; }
.g-sys { width: 240px; padding-left: 11px; }
.buttons {
  display: flex;
  height: 118px;
  padding-top: 6px;
  box-sizing: border-box;
}
.glabel {
  height: 24px;
  text-align: center;
  color: #5c5c5c;
}
.g-loc .glabel { padding-right: 9px; }
.g-net .glabel { padding-right: 10px; }
.g-sys .glabel { padding-right: 16px; }
.rbtn {
  display: flex;
  flex-direction: column;
  align-items: center;
  flex: none;
  white-space: nowrap;
}
.w62 { width: 62px; }
.w79 { width: 79px; }
.w48 { width: 48px; }
.r-doc { width: 32px; height: 41px; margin: 5px 0 7px 2px; }
.r-open { width: 42px; height: 36px; margin: 10px 0 7px 2px; }
.r-rename { width: 42px; height: 38px; margin: 8px 0 7px 2px; }
.r-media { width: 48px; height: 46px; margin: 1px 0 6px; }
.r-map { width: 47px; height: 31px; margin: 15px 0 7px; }
.r-loc { width: 41px; height: 37px; margin: 9px 0 7px; }
.r-gear { width: 48px; height: 48px; margin: 1px 0 4px 2px; }
.caret {
  display: inline-block;
  width: 0;
  height: 0;
  vertical-align: middle;
  border-top: 4px solid #222;
  border-left: 3.5px solid transparent;
  border-right: 3.5px solid transparent;
}
.caret.low { margin: -1px 0 0 6px; }
.small-col {
  display: flex;
  flex-direction: column;
  gap: 11px;
  margin: 4px 0 0 13px;
}
.sbtn {
  display: flex;
  align-items: center;
  gap: 6px;
  white-space: nowrap;
}
.s-a { width: 21px; height: 21px; }

/* address row */
.addressrow {
  display: flex;
  align-items: center;
  height: 57px;
  padding: 5px 13px 6px 0;
  box-sizing: border-box;
}
.nav-arrow { width: 20px; height: 18px; margin-left: 20px; }
.nav-arrow.fwd { margin-left: 25px; }
.nav-down { width: 10px; height: 7px; margin-left: 19px; }
.nav-up { width: 18px; height: 20px; margin-left: 17px; }
.address {
  display: flex;
  align-items: center;
  flex: 1;
  height: 46px;
  margin-left: 10px;
  box-sizing: border-box;
  border: 1px solid #d9d9d9;
  padding-left: 3px;
}
.addr-pc { width: 24px; height: 24px; }
.addr-chev { width: 8px; height: 12px; margin: 0 4px 0 9px; }
.crumb { margin: 0 3px 0 6px; color: #1a1a1a; }
.addr-drop { width: 14px; height: 9px; margin-left: auto; }
.refresh {
  display: flex;
  align-items: center;
  justify-content: center;
  width: 45px;
  height: 44px;
  margin-left: 14px;
  border-left: 1px solid #d9d9d9;
}
.search {
  display: flex;
  align-items: center;
  gap: 20px;
  width: 153px;
  height: 46px;
  margin-left: 12px;
  padding-left: 20px;
  box-sizing: border-box;
  border: 1px solid #d9d9d9;
  color: #6d6d6d;
  white-space: nowrap;
}

/* body */
.body {
  display: flex;
  flex: 1;
  min-height: 0;
}
.sidebar {
  flex: none;
  width: 328px;
  padding: 25px 0 0 1px;
  box-sizing: border-box;
  border-right: 1px solid #f0f0f0;
}
.nav-row {
  display: flex;
  align-items: center;
  width: 323px;
  height: 36px;
  box-sizing: border-box;
  white-space: nowrap;
}
.nav-row.root { margin-bottom: 12px; padding-left: 12px; }
.nav-row.pc-row { padding-left: 10px; background: #cce8ff; }
.nav-row.child { padding-left: 24px; }
.children { margin-bottom: 12px; }
.chev { width: 10px; height: 16px; }
.chev.open { width: 14px; height: 9px; }
.nav-ic { width: 24px; height: 24px; margin-left: 14px; margin-right: 5px; }
.pc-row .nav-ic { margin-left: 12px; }
.child .nav-ic { width: 23px; height: 23px; margin-left: 15px; margin-right: 5px; }

/* content */
.content {
  flex: 1;
  padding: 8px 12px 0 23px;
}
.sec-head {
  display: flex;
  align-items: center;
  height: 36px;
  margin-left: -13px;
  color: #1e3287;
  white-space: nowrap;
}
.sec-chev { width: 14px; height: 8px; margin: 0 7px 0 3px; }
.sec-line {
  flex: 1;
  height: 2px;
  margin: 2px 0 0 11px;
  background: #e5e5e5;
}
.tile-grid {
  display: grid;
  grid-template-columns: repeat(3, 375px);
  column-gap: 6px;
}
.folders {
  grid-auto-rows: 82px;
  row-gap: 2px;
  margin: 1px 0;
}
.devices {
  grid-auto-rows: 82px;
  margin-top: 5px;
}
.folder-tile {
  display: flex;
  align-items: flex-start;
}
.folder-ic {
  margin: 13px 0 0 19px;
}
.folder-tile .tile-name {
  margin: 15px 0 0 11px;
}
.tile-name {
  line-height: 24px;
  white-space: nowrap;
}
.device-tile {
  display: flex;
}
.device-tile.selected {
  background: #d9d9d9;
}
.dev-cell {
  display: flex;
  flex: none;
  justify-content: center;
  width: 84px;
}
.dev-info {
  padding-top: 11px;
  flex: 1;
  min-width: 0;
}
.meter .dev-info { padding-top: 3px; }
.tile-detail {
  margin-top: 3px;
  line-height: 24px;
  color: #6d6d6d;
  white-space: nowrap;
  padding-left: 2px;
}
.meter .tile-detail { margin-top: 1px; }
.device-tile .tile-name { padding-left: 2px; }
.bar {
  width: 284px;
  height: 23px;
  margin-top: 3px;
  box-sizing: border-box;
  border: 1px solid #bcbcbc;
  background: #e6e6e6;
}
.bar-fill {
  height: 100%;
  background: #26a0da;
}
.bar-fill.full { background: #da2626; }
.i-wpscloud { width: 68px; height: 46px; margin-top: 13px; }
.i-baidu { width: 72px; height: 72px; margin-top: 1px; }
.i-cddrive { width: 62px; height: 60px; margin-top: 9px; }
.i-drive, .i-windrive { width: 64px; height: 50px; margin: 23px 0 0 -1px; }

/* taskbar */
.taskbar {
  position: relative;
  display: flex;
  flex: none;
  height: 50px;
  background: #484848;
}
.task {
  display: flex;
  flex: none;
  align-items: flex-end;
  justify-content: center;
  width: 75px;
  height: 50px;
  padding-bottom: 3px;
  box-sizing: border-box;
}
.task.first {
  width: 59px;
  justify-content: flex-start;
  padding: 0 0 4px 5px;
  background: #6c6c6c;
}
.task.running {
  width: 73px;
  margin-left: 2px;
  background: #c06a2b;
  border-right: 7px solid #b5601f;
}
.t-folder { width: 33px; height: 29px; }
.t-mail { width: 36px; height: 33px; }
.t-edge, .t-youdao, .t-chrome, .t-aperture, .t-360 { width: 36px; height: 36px; }
.t-wps { width: 32px; height: 36px; }
.t-ie { width: 36px; height: 40px; margin-bottom: -1px; margin-left: 7px; }
.tray {
  display: flex;
  align-items: center;
  height: 50px;
  margin-left: auto;
  padding: 10px 8px 0 0;
  box-sizing: border-box;
}
.tr-up { width: 18px; height: 10px; }
.tr-bat { width: 24px; height: 18px; margin-left: 16px; }
.tr-wifi { width: 22px; height: 18px; margin-left: 52px; }
.tr-vol { width: 22px; height: 20px; margin-left: 9px; }
.tr-ime { width: 22px; margin-left: 13px; color: #fff; font-size: 22px; }
.tr-sogou { width: 24px; height: 24px; margin-left: 22px; }
.watermark {
  position: absolute;
  left: 1322px;
  top: 19px;
  color: rgba(255, 255, 255, 0.55);
  font: 18px/24px 'Liberation Sans', sans-serif;
  white-space: nowrap;
}
</style>

<style>
html,
body {
  margin: 0;
  overflow: hidden;
}
</style>
